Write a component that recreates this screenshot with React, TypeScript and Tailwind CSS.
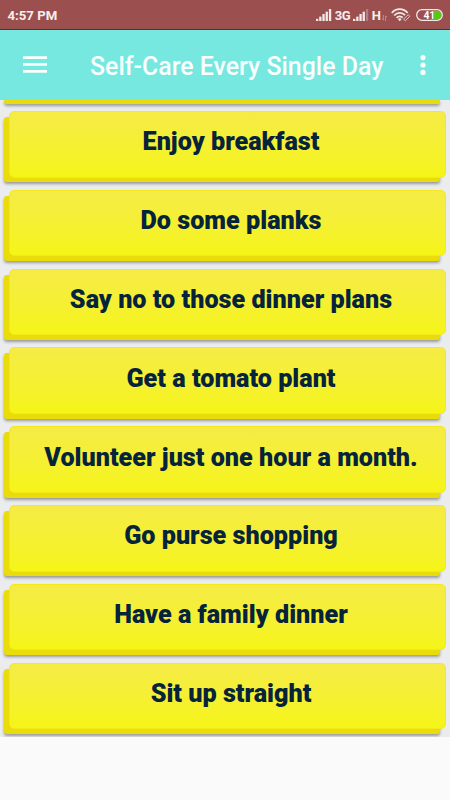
const habits = [
  'Enjoy breakfast',
  'Do some planks',
  'Say no to those dinner plans',
  'Get a tomato plant',
  'Volunteer just one hour a month.',
  'Go purse shopping',
  'Have a family dinner',
  'Sit up straight',
]

function SignalIcon({ weak = false }: { weak?: boolean }) {
  return (
    <svg width="16" height="12" viewBox="0 0 16 12" fill="#f3e9e9" className="shrink-0">
      <rect x="0" y="9.8" width="2.3" height="2.2" />
      <rect x="3.2" y="7.6" width="2.3" height="4.4" />
      <rect x="6.4" y="5" width="2.3" height="7" />
      <rect x="9.6" y="2.7" width="2.3" height="9.3" />
      <rect x="12.9" y="0" width="2.3" height="12" opacity={weak ? 0.3 : 1} />
    </svg>
  )
}

function WifiIcon() {
  return (
    <svg width="20" height="14" viewBox="0 0 20 14" fill="none" className="shrink-0">
      <g stroke="#f3e9e9" strokeWidth="1.8">
        <path d="M.8 5C5-.1 12.4-.1 16.7 5" />
        <path d="M3.2 7.5C6.2 4 11.2 4 14 7.2" />
        <path d="M5.6 9.9C7.3 8 10 8 11.7 9.7" />
      </g>
      <path d="M6.8 10.9Q8.7 9.4 10.7 10.9L8.7 13.2Z" fill="#f3e9e9" />
      <path d="M12.6 11.2l4.6-4.5 1.7 1.5-4.6 4.6z" stroke="#dcc4c4" strokeWidth="1" />
    </svg>
  )
}

function StatusBar() {
  return (
    <div className="flex h-[30px] shrink-0 items-center border-b border-[#991414] bg-[#9b4f4f] pr-[7px] pl-[7.5px] text-[#f7eeee]">
      <span className="mt-[2px] text-[13.2px] leading-none font-bold">4:57 PM</span>
      <div className="mt-px ml-auto flex items-center">
        <SignalIcon />
        <span className="ml-[3px] w-[16px] text-[13px] leading-none font-bold tracking-[-0.5px]">3G</span>
        <span className="ml-[2px] flex">
          <SignalIcon weak />
        </span>
        <span className="ml-[3px] text-[13px] leading-none font-bold">H</span>
        <svg width="5" height="6" viewBox="0 0 5 6" className="mt-[6px] ml-px" stroke="#c99c9c" strokeWidth=".8" fill="none">
          <path d="M1.3 0v5M0 3.8l1.3 1.4M3.6 6V1M5 2.2L3.6 .8" />
        </svg>
        <span className="ml-[4px] flex">
          <WifiIcon />
        </span>
        <svg width="27" height="12" viewBox="0 0 27 12" className="ml-[5px] shrink-0">
          <path d="M18 1.8h3.5a4.2 4.2 0 0 1 0 8.4H18z" fill="#5ac61c" />
          <rect x=".7" y=".7" width="25.6" height="10.6" rx="5.3" fill="none" stroke="#f3e9e9" strokeWidth="1.3" />
          <text x="7.6" y="9.8" fontSize="10.5" fontWeight="700" letterSpacing="-.4" fill="#fff">41</text>
        </svg>
      </div>
    </div>
  )
}

function AppBar() {
  return (
    <header className="flex h-[70px] shrink-0 items-center bg-[#76e8df] pr-[24px] pl-[23px] text-[#f8fffe]">
      <svg width="24" height="17" viewBox="0 0 24 17" fill="currentColor" className="mt-[-1px]">
        <path d="M0 .2h24v2.7H0zM0 7.1h24v2.7H0zM0 14h24v2.7H0z" />
      </svg>
      <h1 className="mt-[4px] ml-[43px] text-[24.9px] leading-none font-medium whitespace-nowrap">
        Self-Care Every Single Day
      </h1>
      <svg width="6" height="20" viewBox="0 0 6 20" fill="currentColor" className="ml-auto">
        <circle cx="3" cy="2.6" r="2.6" />
        <circle cx="3" cy="10" r="2.6" />
        <circle cx="3" cy="17.4" r="2.6" />
      </svg>
    </header>
  )
}

function HabitRow({ label }: { label: string }) {
  return (
    <div className="grid h-[78.8px] shrink-0 pt-[4.4px]">
      {/* back plate, offset to the lower left */}
      <div className="col-start-1 row-start-1 mt-[6px] mr-[10px] ml-[4px] h-[65.4px] rounded-[3px] bg-[#eadb0b] shadow-[0_2px_3px_rgba(0,0,0,0.35)]" />
      <div className="col-start-1 row-start-1 mr-[4px] ml-[9px] flex h-[66.6px] items-center justify-center rounded-[5px] border border-[#f4e91d] bg-linear-to-b from-[#f5eb45] to-[#f5f514] pb-[4.6px] pl-[7px]">
        <span className="text-[25.2px] leading-[25px] font-black whitespace-nowrap text-[#06233c]">{label}</span>
      </div>
    </div>
  )
}

export default function App() {
  return (
    <div className="flex h-[800px] w-[450px] flex-col overflow-hidden bg-[#fafafa] font-[Roboto,sans-serif]">
      <StatusBar />
      <AppBar />
      <main className="h-[637px] shrink-0 overflow-hidden bg-[#ebecee]">
        {/* lower edge of the row scrolled under the app bar */}
        <div className="mr-[10px] mb-[2.6px] ml-[4px] h-[4px] rounded-b-[3px] bg-[#eadb0b] shadow-[0_2px_3px_rgba(0,0,0,0.35)]" />
        {habits.map(label => (
          <HabitRow key={label} label={label} />
        ))}
      </main>
    </div>
  )
}
